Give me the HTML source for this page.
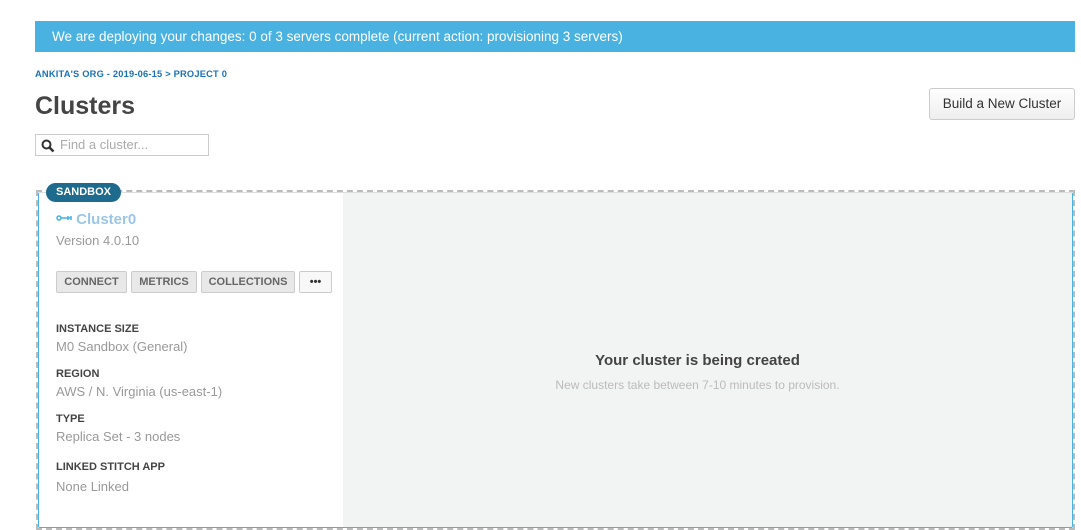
<!DOCTYPE html>
<html><head><style>
*{box-sizing:border-box;margin:0;padding:0}
body{width:1081px;height:530px;background:#fff;font-family:"Liberation Sans",sans-serif;position:relative;overflow:hidden}
.banner{position:absolute;left:35px;top:21px;width:1040px;height:31px;background:#49b2e0;color:#fff;font-size:13.5px;line-height:31px;padding-left:17px}
.bc{position:absolute;left:35px;top:69px;font-size:9.3px;font-weight:bold;color:#1a72b5;letter-spacing:0.2px}
h1{position:absolute;left:35px;top:92px;font-size:25px;font-weight:bold;color:#444}
.search{position:absolute;left:35px;top:134px;width:174px;height:22px;border:1px solid #ccc;font-size:13px;color:#aaa;line-height:20px;padding-left:24px}
.search svg{position:absolute;left:5px;top:4px}
.btn{position:absolute;left:929px;top:88px;width:146px;height:32px;border:1px solid #ccc;border-radius:3px;background:linear-gradient(#fff,#eee);font-size:13.5px;color:#333;text-align:center;line-height:30px}
.card{position:absolute;left:36px;top:190px;width:1039px;height:340px;border:2px dashed #bbb}
.inner{position:absolute;left:0;top:0;right:0;bottom:0;border:1px solid #49b2e0;border-top-color:#ddd;border-radius:2px;background:#f2f3f3;overflow:hidden}
.left{position:absolute;left:0;top:0;width:304px;bottom:0;background:#fff}
.tag{position:absolute;left:46px;top:183px;background:#1f6b8e;color:#fff;font-size:11px;font-weight:bold;border-radius:10px;padding:0 10px;height:19px;line-height:19px}
.name{position:absolute;left:56px;top:211px;font-size:15px;font-weight:bold;color:#9cc6e6}
.ver{position:absolute;left:56px;top:233px;font-size:13px;color:#999}
.b{position:absolute;top:271px;height:22px;border:1px solid #ccc;border-radius:2px;background:#e8e8e8;font-size:11px;font-weight:bold;color:#666;line-height:20px;text-align:center}
.lbl{position:absolute;left:56px;font-size:11px;font-weight:bold;color:#444}
.val{position:absolute;left:56px;font-size:13px;color:#999}
.t1{position:absolute;left:343px;width:709px;top:352px;text-align:center;font-size:15px;font-weight:bold;color:#444}
.t2{position:absolute;left:343px;width:709px;top:378px;text-align:center;font-size:12px;color:#bbb}
</style></head><body>
<div class="banner">We are deploying your changes: 0 of 3 servers complete (current action: provisioning 3 servers)</div>
<div class="bc">ANKITA'S ORG - 2019-06-15 &gt; PROJECT 0</div>
<h1>Clusters</h1>
<div class="search"><svg width="14" height="14" viewBox="0 0 14 14"><circle cx="5.5" cy="5.5" r="4" fill="none" stroke="#333" stroke-width="2"/><path d="M8.5 8.5L12.5 12.5" stroke="#333" stroke-width="2.5"/></svg>Find a cluster...</div>
<div class="btn">Build a New Cluster</div>
<div class="card"><div class="inner"><div class="left"></div></div></div>
<div class="tag">SANDBOX</div>
<div class="name"><svg width="16" height="8" viewBox="0 0 16 8" style="vertical-align:2px"><circle cx="3" cy="4" r="2" fill="none" stroke="#49b2e0" stroke-width="1.5"/><path d="M5 4H15M12 2V6M15 2V6" stroke="#49b2e0" stroke-width="1.5"/></svg> Cluster0</div>
<div class="ver">Version 4.0.10</div>
<div class="b" style="left:56px;width:71px">CONNECT</div>
<div class="b" style="left:131px;width:66px">METRICS</div>
<div class="b" style="left:201px;width:94px">COLLECTIONS</div>
<div class="b" style="left:299px;width:33px;background:#f8f8f8;color:#333">•••</div>
<div class="lbl" style="top:323px">INSTANCE SIZE</div>
<div class="val" style="top:339px">M0 Sandbox (General)</div>
<div class="lbl" style="top:368px">REGION</div>
<div class="val" style="top:384px">AWS / N. Virginia (us-east-1)</div>
<div class="lbl" style="top:413px">TYPE</div>
<div class="val" style="top:429px">Replica Set - 3 nodes</div>
<div class="lbl" style="top:461px">LINKED STITCH APP</div>
<div class="val" style="top:479px">None Linked</div>
<div class="t1">Your cluster is being created</div>
<div class="t2">New clusters take between 7-10 minutes to provision.</div>
</body></html>
